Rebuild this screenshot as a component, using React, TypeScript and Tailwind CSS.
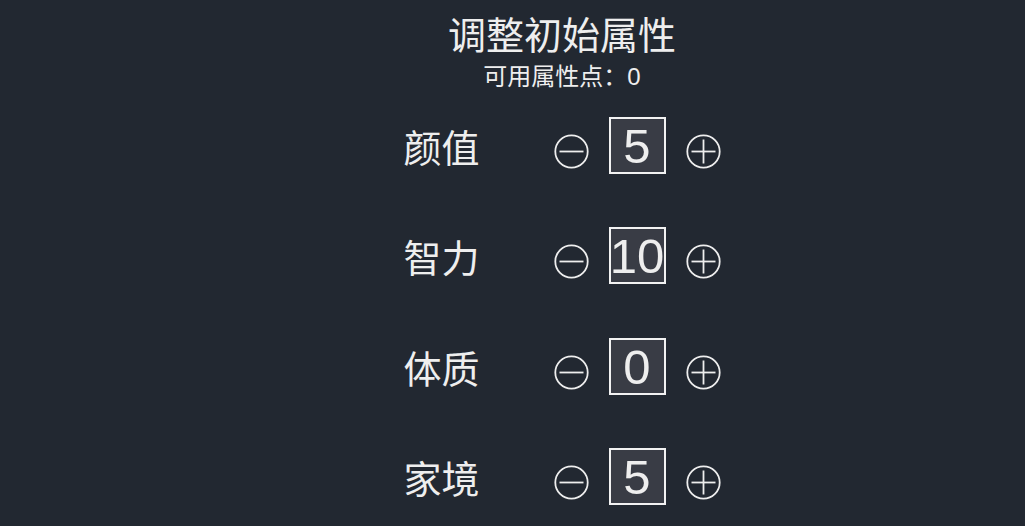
const FONT = '"Liberation Sans", "Noto Sans CJK SC", sans-serif';

const attributes = [
  { name: '颜值', value: 5 },
  { name: '智力', value: 10 },
  { name: '体质', value: 0 },
  { name: '家境', value: 5 },
];

function CircleButton({ kind }: { kind: 'minus' | 'plus' }) {
  return (
    <button className="mt-3 flex h-[35px] w-[35px] items-center justify-center text-[#eeeeee]">
      <svg width="35" height="35" viewBox="0 0 35 35" fill="none" stroke="currentColor" strokeWidth="1.8">
        <circle cx="17.5" cy="17.5" r="16.2" />
        <line x1="5.5" y1="17.5" x2="29.5" y2="17.5" />
        {kind === 'plus' && <line x1="17.5" y1="5.5" x2="17.5" y2="29.5" />}
      </svg>
    </button>
  );
}

function AttributeRow({ name, value }: { name: string; value: number }) {
  return (
    <div className="flex h-[56px] items-center">
      <div className="mt-[7px] w-[150px] text-[38px] leading-none">{name}</div>
      <CircleButton kind="minus" />
      <div className="ml-[20px] flex h-[57px] w-[57px] items-center justify-center border-2 border-[#f2f2f2] bg-[#393c45] pt-[2px] text-[49px] leading-none">
        {value}
      </div>
      <div className="ml-[20px]">
        <CircleButton kind="plus" />
      </div>
    </div>
  );
}

export default function App() {
  return (
    <div
      className="flex h-[526px] flex-col items-center overflow-hidden bg-[#222831] pl-[99px] pt-[14px] text-[#eeeeee]"
      style={{ fontFamily: FONT }}
    >
      <h1 className="text-[38px] leading-[44px]">调整初始属性</h1>
      <div className="mt-[5px] text-[24px] leading-[28px]">可用属性点：0</div>

      <div className="mt-[26px] flex flex-col gap-[54.5px]">
        {attributes.map((a) => (
          <AttributeRow key={a.name} name={a.name} value={a.value} />
        ))}
      </div>
    </div>
  );
}
